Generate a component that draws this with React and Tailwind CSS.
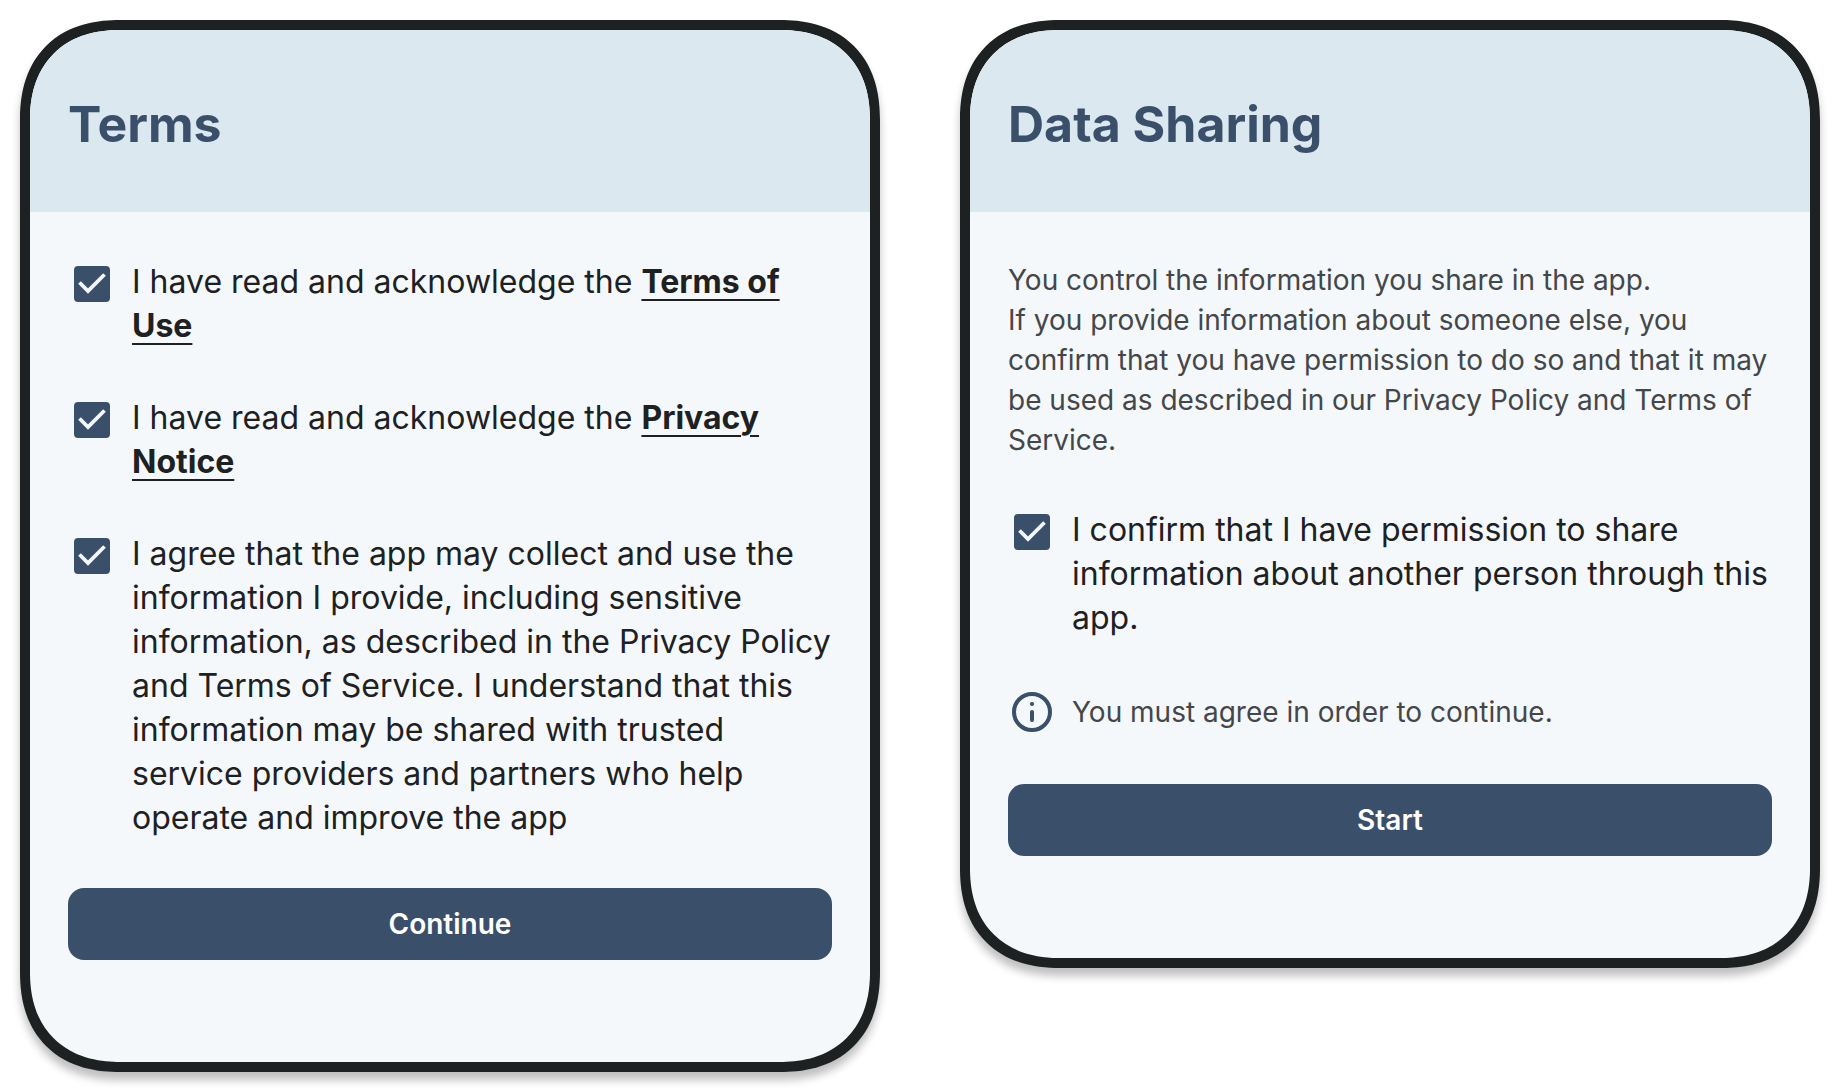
import React, { useState } from 'react';

const PhoneCard = ({ title, children }) => (
  <section className="flex-1 overflow-hidden rounded-[100px] border-10 border-[#1e2122] bg-[#f4f8fb] shadow-[0_8px_8px_rgba(0,0,0,0.25)] [corner-shape:superellipse(1.2)]">
    <header className="bg-[#dce8f0] px-[38px] pt-16 pb-[58px]">
      <h1 className="text-[50px] leading-[60px] font-bold text-[#3a506a]">{title}</h1>
    </header>
    <div className="flex flex-col gap-12 px-[38px] pt-12 pb-[102px]">{children}</div>
  </section>
);

const CheckItem = ({ id, children }) => {
  const [checked, setChecked] = useState(true);

  return (
    <div className="flex items-start gap-4">
      <span className="grid size-12 shrink-0 place-items-center">
        <input
          id={id}
          type="checkbox"
          checked={checked}
          onChange={(e) => setChecked(e.target.checked)}
          className="col-start-1 row-start-1 size-9 cursor-pointer appearance-none rounded-sm border-4 border-[#3a506a] checked:bg-[#3a506a]"
        />
        {checked && (
          <svg viewBox="0 0 36 36" fill="none" className="pointer-events-none col-start-1 row-start-1 size-9">
            <path d="M5.5 16.5L14 25L30.5 8.5" stroke="#f4f8fb" strokeWidth="3.8" />
          </svg>
        )}
      </span>
      <label htmlFor={id} className="min-w-0 flex-1 text-[32px] leading-[44px] text-[#1e2122]">
        {children}
      </label>
    </div>
  );
};

const TermsLink = ({ href, children }) => (
  <a href={href} className="font-bold underline decoration-2 underline-offset-6">
    {children}
  </a>
);

const PrimaryButton = ({ children }) => (
  <button
    type="button"
    className="h-18 w-full cursor-pointer rounded-2xl bg-[#3a506a] text-[28px] leading-10 font-semibold text-white"
  >
    {children}
  </button>
);

const InfoIcon = () => (
  <svg viewBox="0 0 48 48" fill="none" className="size-12 shrink-0" aria-hidden="true">
    <circle cx="24" cy="24" r="18" stroke="#3a506a" strokeWidth="4" />
    <circle cx="24" cy="16" r="2.1" fill="#3a506a" />
    <path d="M24 24V32" stroke="#3a506a" strokeWidth="4" strokeLinecap="round" />
  </svg>
);

const App = () => {
  return (
    <main className="flex min-h-screen items-start gap-20 bg-white p-5 font-['Inter',sans-serif]">
      <PhoneCard title="Terms">
        <CheckItem id="terms">
          I have read and acknowledge the <TermsLink href="#terms-of-use">Terms of Use</TermsLink>
        </CheckItem>
        <CheckItem id="privacy">
          I have read and acknowledge the <TermsLink href="#privacy-notice">Privacy Notice</TermsLink>
        </CheckItem>
        <CheckItem id="collect">
          I agree that the app may collect and use the information I provide, including sensitive
          information, as described in the Privacy Policy and Terms of Service. I understand that this
          information may be shared with trusted service providers and partners who help operate and
          improve the app
        </CheckItem>
        <PrimaryButton>Continue</PrimaryButton>
      </PhoneCard>

      <PhoneCard title="Data Sharing">
        <p className="text-[28px] leading-10 text-[#444749]">
          You control the information you share in the app.
          <br />
          If you provide information about someone else, you confirm that you have permission to do so
          and that it may be used as described in our Privacy Policy and Terms of Service.
        </p>
        <CheckItem id="permission">
          I confirm that I have permission to share information about another person through this app.
        </CheckItem>
        <div className="flex items-center gap-4">
          <InfoIcon />
          <p className="text-[28px] leading-10 text-[#444749]">You must agree in order to continue.</p>
        </div>
        <PrimaryButton>Start</PrimaryButton>
      </PhoneCard>
    </main>
  );
};

export default App;
